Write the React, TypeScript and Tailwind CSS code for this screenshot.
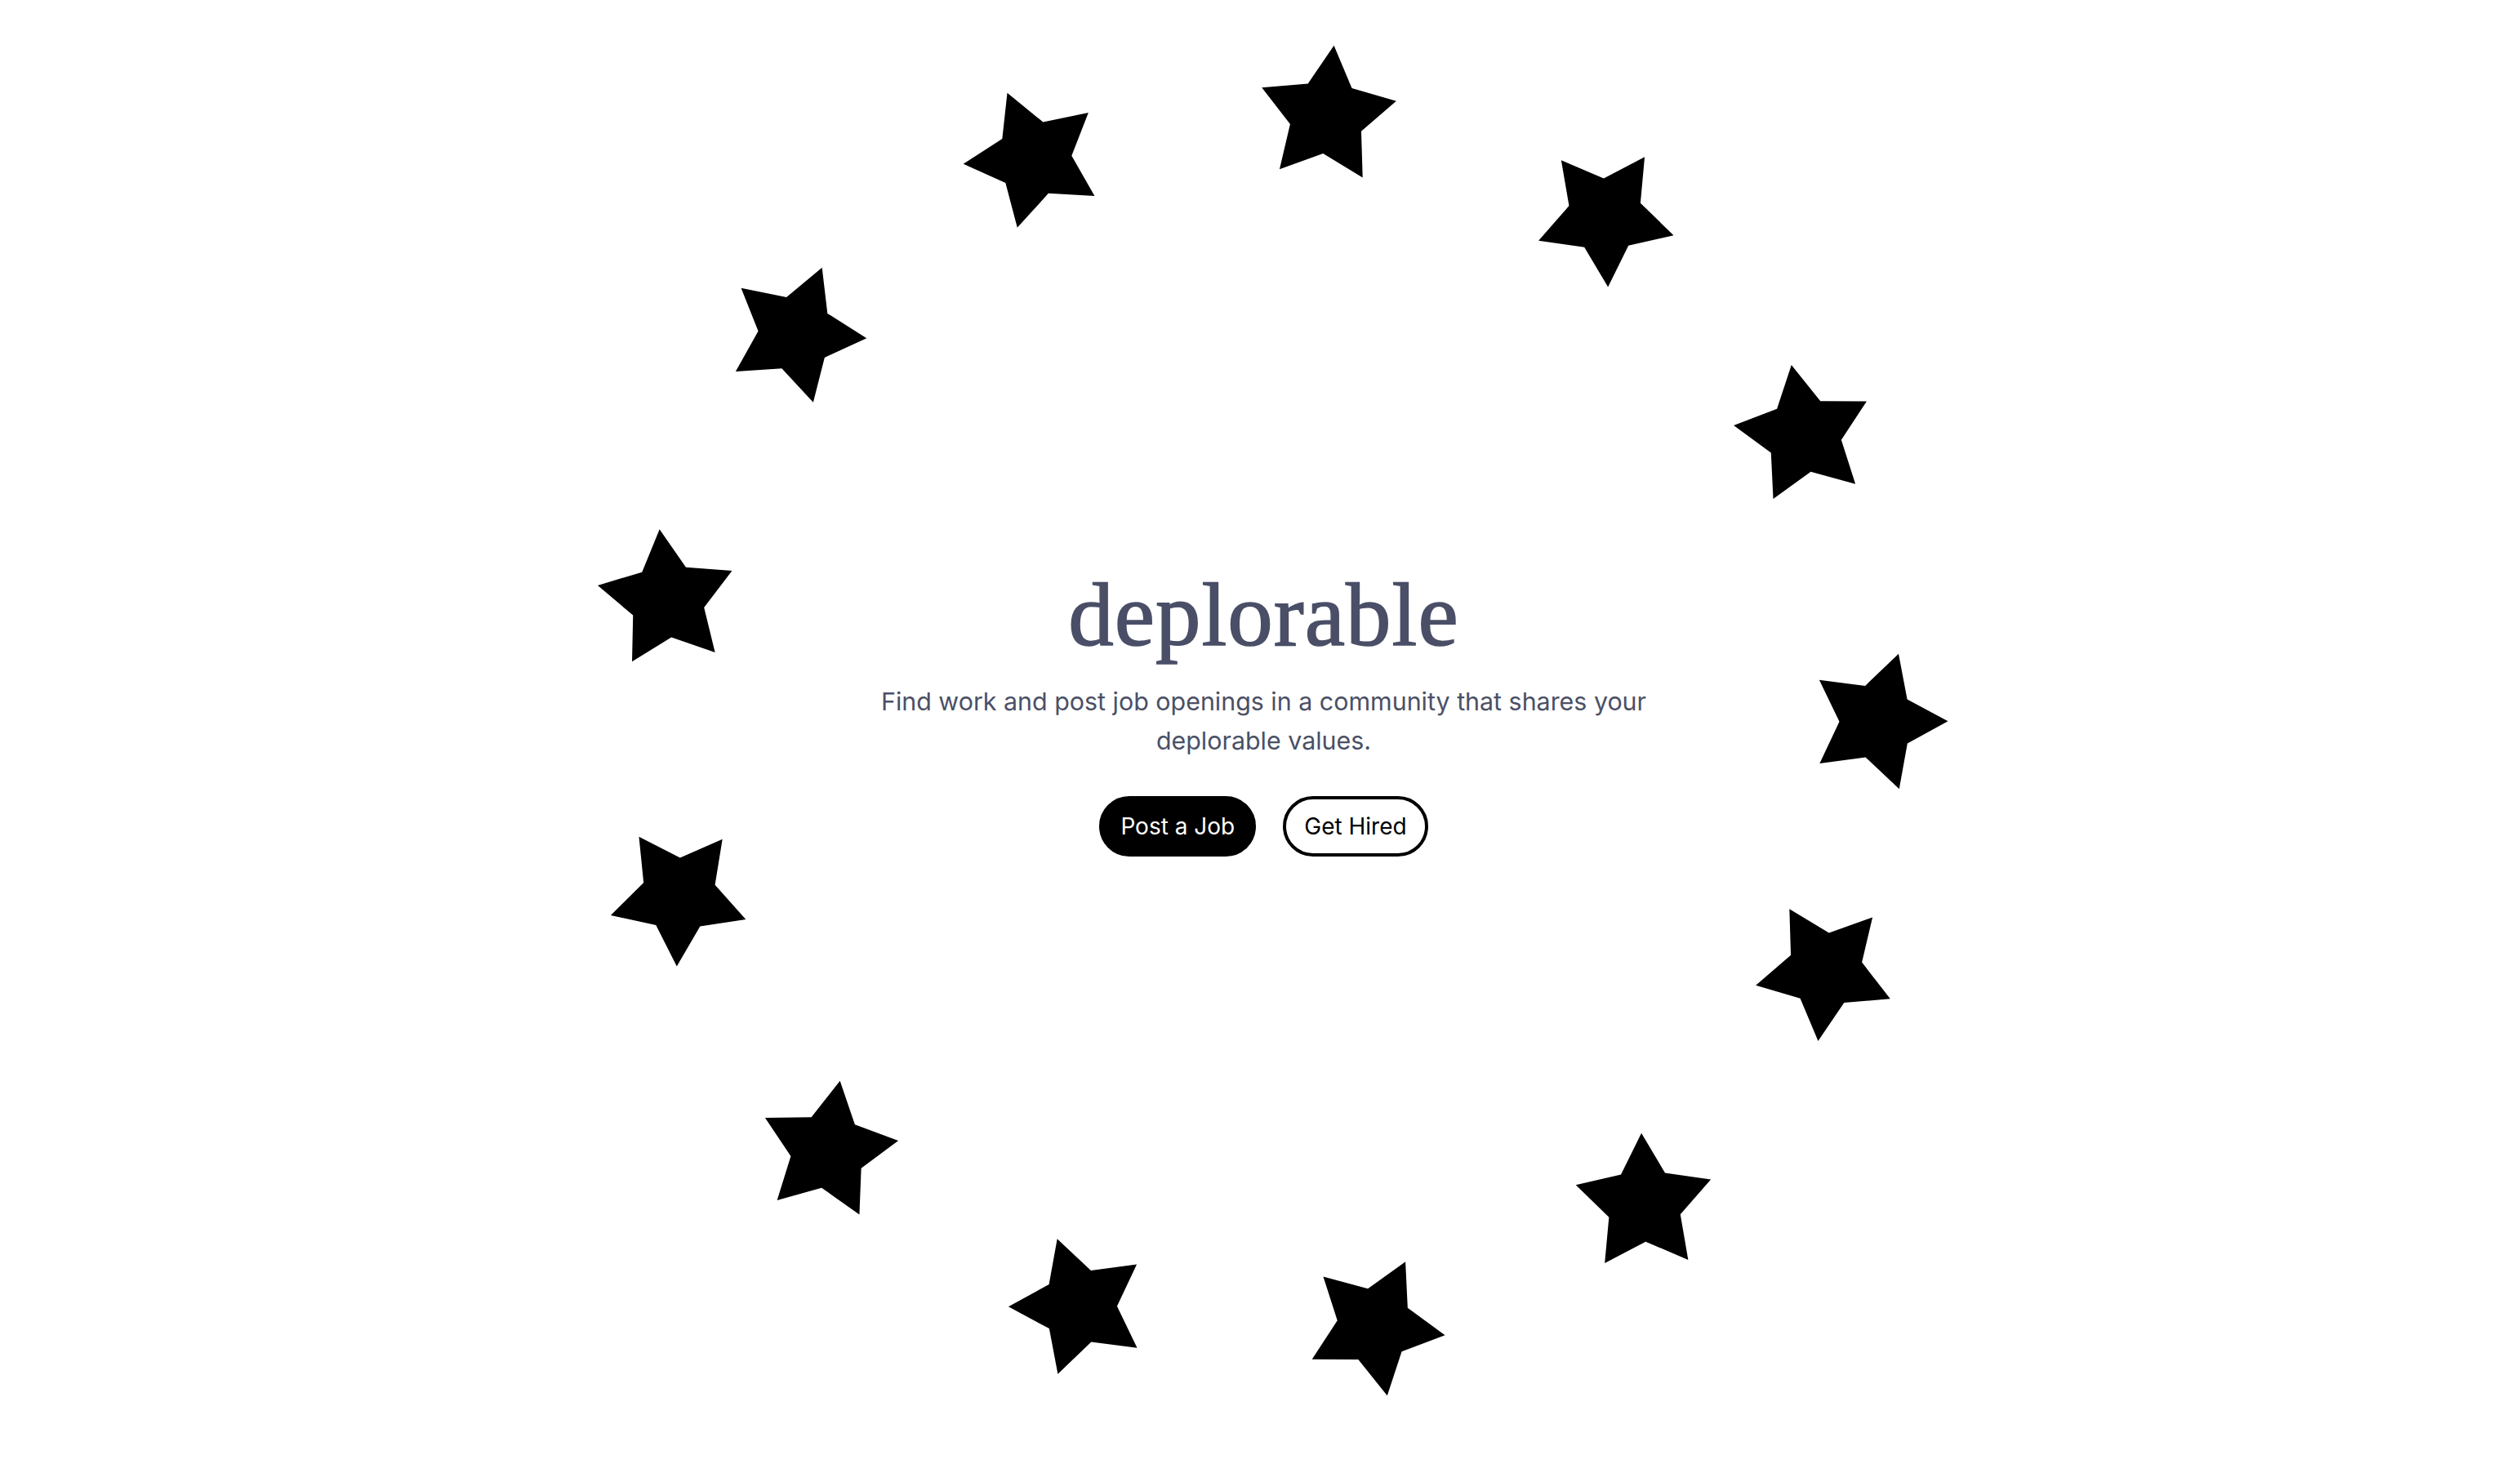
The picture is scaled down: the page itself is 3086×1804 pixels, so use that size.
import React from 'react';

// ring of 13 stars, 28deg apart, each pointing outward
const RING_RADIUS = 748.5;
const STAR_ANGLES = Array.from({ length: 13 }, (_, i) => 113.74 + i * 28);

const starPoints = Array.from({ length: 10 }, (_, k) => {
  const r = k % 2 === 0 ? 87 : 46;
  const a = ((-90 + k * 36) * Math.PI) / 180;
  return `${(87 + r * Math.cos(a)).toFixed(2)},${(87 + r * Math.sin(a)).toFixed(2)}`;
}).join(' ');

function Star({ angle }: { angle: number }) {
  return (
    <div
      className="absolute -left-[87px] -top-[87px] h-[174px] w-[174px]"
      style={{ transform: `rotate(${angle}deg) translateY(-${RING_RADIUS}px)` }}
    >
      <svg width="174" height="174" viewBox="0 0 174 174">
        <polygon points={starPoints} fill="#000" />
      </svg>
    </div>
  );
}

export default function App() {
  return (
    <div className="relative h-screen w-full overflow-hidden bg-white">
      {/* star ring */}
      <div className="pointer-events-none absolute left-[1549.5px] top-[887px] h-0 w-0">
        {STAR_ANGLES.map((a) => (
          <Star key={a} angle={a} />
        ))}
      </div>

      <main className="relative flex h-full flex-col items-center justify-center pb-[59px] pl-[9px]">
        <h1 className="text-[111px] leading-none tracking-[1px] text-[#4a4f67] [-webkit-text-stroke:1.5px_#4a4f67] [font-family:'Liberation_Serif',serif]">
          deplorable
        </h1>
        <p className="mt-[27px] max-w-[1000px] text-center text-[30.4px] leading-[48px] text-[#4b5066] [font-family:Inter,sans-serif]">
          Find work and post job openings in a community that shares your deplorable values.
        </p>
        <div className="mt-[44px] flex gap-[33px] [font-family:Inter,sans-serif]">
          <button className="flex h-[74px] items-center rounded-full border-4 border-black bg-black px-[22px] text-[28px] text-white">
            Post a Job
          </button>
          <button className="flex h-[74px] items-center rounded-full border-4 border-black bg-white px-[22px] text-[28px] text-black">
            Get Hired
          </button>
        </div>
      </main>
    </div>
  );
}
